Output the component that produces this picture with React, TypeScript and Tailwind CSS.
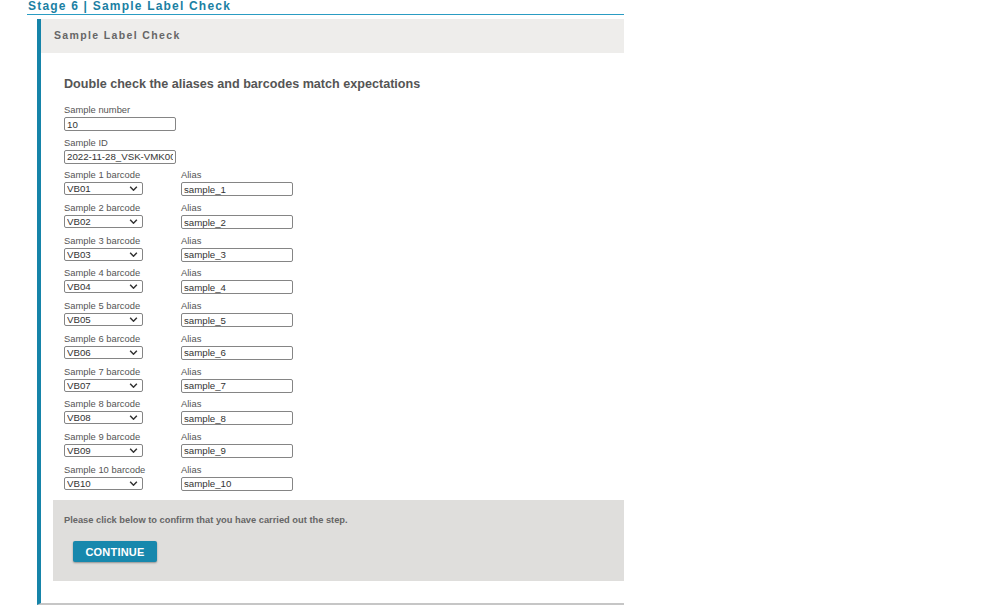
import { useState } from "react";

const rows = Array.from({ length: 10 }, (_, i) => ({
  n: i + 1,
  barcode: `VB${String(i + 1).padStart(2, "0")}`,
  alias: `sample_${i + 1}`,
}));

const barcodes = rows.map((r) => r.barcode);

function Chevron() {
  return (
    <svg
      viewBox="0 0 10 6"
      className="pointer-events-none absolute right-[5px] top-[4px] h-[5px] w-[9px]"
      fill="none"
      stroke="#333"
      strokeWidth="1.8"
    >
      <path d="M1 1l4 4 4-4" />
    </svg>
  );
}

const inputCls =
  "mt-[1px] h-[14px] w-[112px] rounded-[2px] border border-[#858585] px-[2px] py-0 text-[9.7px] leading-[12px] text-[#333] outline-none";

export default function App() {
  const [sampleNumber, setSampleNumber] = useState("10");
  const [sampleId, setSampleId] = useState("2022-11-28_VSK-VMK004");
  const [values, setValues] = useState(rows);

  const update = (i: number, key: "barcode" | "alias", v: string) => {
    setValues((prev) => prev.map((r, j) => (j === i ? { ...r, [key]: v } : r)));
  };

  return (
    <div className="min-h-[615px] bg-white font-['Liberation_Sans',Arial,sans-serif] text-[#555]">
      <div className="ml-[27px] w-[597px]">
        <h2 className="h-[15px] border-b border-[#2a9cc3] pl-px text-[12px] leading-[13px] font-bold tracking-[0.1em] text-[#1b7fa3]">
          Stage 6 | Sample Label Check
        </h2>

        <div className="mt-[4px] ml-[10px] border-b-2 border-l-4 border-b-[#c6c6c6] border-l-[#1684a9]">
          <div className="flex h-[34px] items-center bg-[#eeedeb] pl-[13px] text-[10.5px] font-bold tracking-[0.13em] text-[#666]">
            Sample Label Check
          </div>

          <div className="pl-[23px] pt-[24px]">
            <h3 className="text-[12.6px] leading-[15px] font-bold text-[#555]">
              Double check the aliases and barcodes match expectations
            </h3>

            <div className="mt-[12px] flex flex-col">
              <label className="flex h-[32.7px] flex-col text-[9.4px] leading-[12px]">
                Sample number
                <input
                  value={sampleNumber}
                  onChange={(e) => setSampleNumber(e.target.value)}
                  className={inputCls}
                />
              </label>
              <label className="flex h-[32.7px] flex-col text-[9.4px] leading-[12px]">
                Sample ID
                <input
                  value={sampleId}
                  onChange={(e) => setSampleId(e.target.value)}
                  className={inputCls}
                />
              </label>

              {values.map((r, i) => (
                <div key={r.n} className="flex h-[32.7px] gap-[38px] text-[9.4px] leading-[12px]">
                  <label className="flex w-[79px] flex-col whitespace-nowrap">
                    Sample {r.n} barcode
                    <span className="relative mt-[1px] block h-[13px] w-[79px]">
                      <select
                        value={r.barcode}
                        onChange={(e) => update(i, "barcode", e.target.value)}
                        className="block h-[13px] w-full appearance-none rounded-[2px] border border-[#858585] px-[2px] py-0 text-[9.7px] leading-[11px] text-[#333] outline-none"
                      >
                        {barcodes.map((b) => (
                          <option key={b}>{b}</option>
                        ))}
                      </select>
                      <Chevron />
                    </span>
                  </label>
                  <label className="flex flex-col">
                    Alias
                    <input
                      value={r.alias}
                      onChange={(e) => update(i, "alias", e.target.value)}
                      className={inputCls}
                    />
                  </label>
                </div>
              ))}
            </div>
          </div>

          <div className="mt-[4px] mr-0 mb-[22px] ml-[12px] h-[81px] bg-[#dfdedc] pt-[14px] pl-[11px]">
            <p className="text-[9.3px] leading-[12px] font-bold text-[#666]">
              Please click below to confirm that you have carried out the step.
            </p>
            <button
              type="button"
              className="mt-[15px] ml-[9px] h-[21px] w-[84px] rounded-[2px] bg-[#1788ad] text-[11px] font-bold tracking-[0.02em] text-white shadow-[0_1px_2px_rgba(0,0,0,0.35)]"
            >
              CONTINUE
            </button>
          </div>
        </div>
      </div>
    </div>
  );
}
